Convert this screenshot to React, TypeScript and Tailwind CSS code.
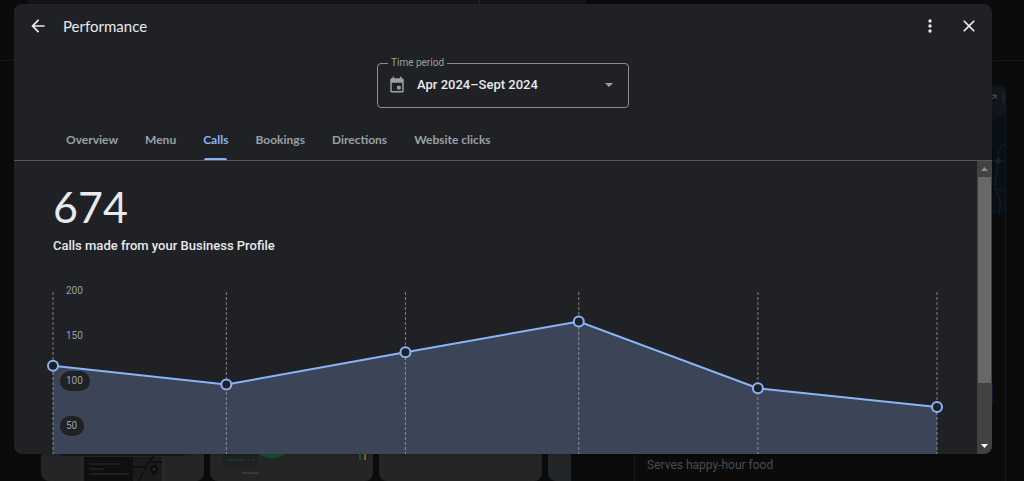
import React from 'react';

const tabs = ['Overview', 'Menu', 'Calls', 'Bookings', 'Directions', 'Website clicks'];

const calls = [
  { month: 'Apr', days: 30, value: 117 },
  { month: 'May', days: 31, value: 96 },
  { month: 'Jun', days: 30, value: 132 },
  { month: 'Jul', days: 31, value: 166 },
  { month: 'Aug', days: 31, value: 92 },
  { month: 'Sept', days: 30, value: 71 },
];

const CHART_WIDTH = 884;
const CHART_HEIGHT = 180;
const MAX_VALUE = 200;

const yFor = (value: number) => CHART_HEIGHT - (value / MAX_VALUE) * CHART_HEIGHT;

const CallsChart: React.FC = () => {
  const totalDays = calls.slice(0, -1).reduce((sum, c) => sum + c.days, 0);
  const points = calls.map((c, i) => {
    const daysBefore = calls.slice(0, i).reduce((sum, p) => sum + p.days, 0);
    return { month: c.month, x: (daysBefore / totalDays) * CHART_WIDTH, y: yFor(c.value) };
  });
  const line = points.map((p) => `${p.x},${p.y}`).join(' ');

  return (
    <svg
      viewBox={`0 0 ${CHART_WIDTH} ${CHART_HEIGHT}`}
      className="block w-full shrink-0 overflow-visible"
      role="img"
      aria-label="Calls per month"
    >
      <polygon points={`0,${CHART_HEIGHT} ${line} ${CHART_WIDTH},${CHART_HEIGHT}`} fill="#3b4557" />
      {points.map((p) => (
        <line
          key={p.month}
          x1={p.x}
          x2={p.x}
          y1={1}
          y2={CHART_HEIGHT}
          stroke="#bdc1c6"
          strokeOpacity={0.6}
          strokeDasharray="3 2"
        />
      ))}
      <polyline points={line} fill="none" stroke="#8ab4f8" strokeWidth={2} />
      {points.map((p) => (
        <circle key={p.month} cx={p.x} cy={p.y} r={5} fill="#202124" stroke="#8ab4f8" strokeWidth={2} />
      ))}
      {[200, 150, 100, 50].map((tick) => (
        <g key={tick}>
          <rect
            x={7}
            y={yFor(tick) - 10}
            width={tick >= 100 ? 30 : 24}
            height={20}
            rx={10}
            fill="#202124"
          />
          <text x={13} y={yFor(tick) + 3} fill="#9aa0a6" className="font-['Roboto',sans-serif] text-[10px]">
            {tick}
          </text>
        </g>
      ))}
    </svg>
  );
};

const Scrollbar: React.FC = () => (
  <div className="flex w-[15px] shrink-0 flex-col bg-[#424242]" aria-hidden="true">
    <svg viewBox="0 0 15 16" className="h-4 w-[15px] shrink-0">
      <path d="M4 10h7L7.5 6z" fill="#8c8c8c" />
    </svg>
    <div className="mx-px h-[206px] shrink-0 bg-[#686868]"></div>
    <div className="flex-1"></div>
    <svg viewBox="0 0 15 16" className="h-4 w-[15px] shrink-0">
      <path d="M4 6h7l-3.500 4z" fill="#fff" />
    </svg>
  </div>
);

const BackgroundPage: React.FC = () => (
  <div className="flex h-full flex-col bg-[#0b0b0b]" aria-hidden="true">
    <div className="flex h-[61px] shrink-0 border-b border-[#151515] pl-7">
      <div className="flex h-9 w-[558px] rounded-b-2xl bg-[#131414]">
        <div className="ml-[451px] h-full border-l border-[#232424]"></div>
      </div>
    </div>
    <div className="flex min-h-0 flex-1">
      <div className="ml-[41px] flex w-[530px] shrink-0 items-end gap-[6px] overflow-hidden">
        <div className="flex h-20 w-[163px] shrink-0 items-end justify-center rounded-lg bg-[#242526]">
          <svg viewBox="0 0 124 29" className="h-[29px] w-[124px]">
            <path d="M0 0h124v4H0z" fill="#18191a" />
            <path d="M22 5h50v24H22z" fill="#0f0f10" />
            <path d="M72 5h30v24H72z" fill="#191b1d" />
            <path d="M28 12h32M28 17h15M28 22h40" stroke="#232425" strokeWidth="1.500" />
            <path d="M72 15h13l7-11M85 15l-7 14M88 10h14" stroke="#0e0f10" strokeWidth="1.500" fill="none" />
            <path d="M22 5v24M102 5v24" stroke="#343536" fill="none" />
            <path d="M93 13a4 4 0 0 1 4 4c0 3-4 7-4 7s-4-4-4-7a4 4 0 0 1 4-4z" fill="#0d0e0f" />
            <circle cx="93" cy="17" r="1.500" fill="#2b2c2e" />
          </svg>
        </div>
        <div className="flex h-20 w-[163px] shrink-0 items-end rounded-lg bg-[#242526]">
          <svg viewBox="0 0 163 34" className="h-[34px] w-[163px]">
            <path d="M13 6h35v14H13z" fill="#1e2021" />
            <path d="M16 13h19M38 13h2M42 13h3" stroke="#1d4327" />
            <ellipse cx="62" cy="4" rx="15" ry="7" fill="#1b4b27" />
            <path d="M32 26h17" stroke="#363738" strokeWidth="2" />
            <path d="M150 4v9" stroke="#1f4f2b" strokeWidth="2" />
            <path d="M155 4v9" stroke="#7c601c" strokeWidth="2" />
          </svg>
        </div>
        <div className="h-20 w-[163px] shrink-0 rounded-lg bg-[#242526]"></div>
        <div className="h-20 w-[163px] shrink-0 rounded-lg bg-[#222628]"></div>
      </div>
      <div className="ml-[63px] mt-[22px] flex w-[372px] shrink-0 flex-col justify-between rounded-t-lg border-x border-[#171717]">
        <svg viewBox="0 0 370 131" className="h-[131px] w-full">
          <rect width="370" height="131" rx="5" fill="#090f19" />
          <path d="M356 3h14v26l-8 5-6-3z" fill="#12161b" />
          <path d="M367 10h3v10h-3z" fill="#122536" />
          <path d="M357 12h4v4M361 12l-4 4" stroke="#555" fill="none" />
          <path
            d="M356 78h14M364 78c-2-10 2-15 6-17M364 78c-3 12-4 18-4 28l10 2M356 31l4 7M360 106c6 8 6 16 4 24"
            stroke="#171e27"
            fill="none"
          />
          <path d="M359 78l4-4 4 4-4 4z" fill="#1b1f24" />
        </svg>
        <div className="ml-auto mt-[120px] h-[26px] w-[340px] rounded-[4px] bg-[#121e31] mr-3"></div>
        <p className="px-3 pb-[7px] font-['Roboto',sans-serif] text-xs leading-[18px] text-[#4a4b4d]">
          Serves happy-hour food
        </p>
      </div>
    </div>
  </div>
);

const App: React.FC = () => {
  return (
    <div className="relative h-screen overflow-hidden font-['Roboto',sans-serif]">
      <BackgroundPage />
      <div className="absolute inset-0 flex pb-[27px] pl-[14px] pr-8 pt-1">
        <div
          role="dialog"
          aria-labelledby="dialog-title"
          className="flex min-w-0 flex-1 flex-col overflow-hidden rounded-lg bg-[#202124] text-[#e8eaed] shadow-sm"
        >
          <header className="flex h-11 shrink-0 items-center px-[13px]">
            <button type="button" aria-label="Back" className="ml-px">
              <svg viewBox="0 0 24 24" className="size-5" fill="currentColor">
                <path d="M20 11H7.830l5.590-5.590L12 4l-8 8 8 8 1.410-1.410L7.830 13H20z" />
              </svg>
            </button>
            <h1 id="dialog-title" className="ml-[15px] flex-1 font-['Lato',sans-serif] text-[15px]">
              Performance
            </h1>
            <button type="button" aria-label="More options">
              <svg viewBox="0 0 24 24" className="size-5" fill="currentColor">
                <circle cx="12" cy="6" r="2" />
                <circle cx="12" cy="12" r="2" />
                <circle cx="12" cy="18" r="2" />
              </svg>
            </button>
            <button type="button" aria-label="Close" className="ml-[19px]">
              <svg viewBox="0 0 24 24" className="size-5" fill="currentColor">
                <path d="M19 6.410 17.590 5 12 10.590 6.410 5 5 6.410 10.590 12 5 17.590 6.410 19 12 13.410 17.590 19 19 17.590 13.410 12z" />
              </svg>
            </button>
          </header>

          <fieldset className="mx-auto mt-2 h-[52px] w-[252px] shrink-0 rounded border border-[#8b8d91] pl-[10px]">
            <legend className="px-[3px] text-[10px] leading-[14px] text-[#9aa0a6]">
              <label htmlFor="period">Time period</label>
            </legend>
            <div className="relative flex h-[30px] items-center">
              <svg viewBox="0 0 24 24" className="size-[18px] shrink-0" fill="#9aa0a6">
                <path d="M19 3h-1V1h-2v2H8V1H6v2H5a2 2 0 0 0-2 2v15a2 2 0 0 0 2 2h14a2 2 0 0 0 2-2V5a2 2 0 0 0-2-2zm0 17H5V9h14z" />
                <rect x="12" y="13" width="5" height="5" rx="1.500" />
              </svg>
              <select
                id="period"
                className="ml-[11px] flex-1 appearance-none bg-transparent text-[13px] font-medium text-[#e8eaed] outline-none"
              >
                <option>Apr 2024–Sept 2024</option>
              </select>
              <svg viewBox="0 0 10 5" className="pointer-events-none absolute right-[14px] h-[5px] w-[10px]">
                <path d="M1 0h8L5 4z" fill="#9aa0a6" />
              </svg>
            </div>
          </fieldset>

          <nav className="mt-3 flex h-[41px] shrink-0 gap-[27px] border-b border-[#55575c] pl-[52px]">
            {tabs.map((tab) => (
              <button
                key={tab}
                type="button"
                className={
                  tab === 'Calls'
                    ? "relative font-['Lato',sans-serif] text-xs font-bold text-[#8ab4f8]"
                    : "font-['Lato',sans-serif] text-xs font-bold text-[#9aa0a6]"
                }
              >
                {tab}
                {tab === 'Calls' && (
                  <span className="absolute inset-x-[1px] bottom-0 h-[2px] rounded-t bg-[#8ab4f8]"></span>
                )}
              </button>
            ))}
          </nav>

          <div className="flex min-h-0 flex-1">
            <main className="flex min-w-0 flex-1 flex-col overflow-hidden pl-[39px] pr-10">
              <p className="mt-6 font-['Lato',sans-serif] text-[43px] leading-[44px]">674</p>
              <h2 className="mt-[6px] text-[13px] font-medium leading-[22px]">
                Calls made from your Business Profile
              </h2>
              <div className="mt-[34px] shrink-0">
                <CallsChart />
              </div>
            </main>
            <Scrollbar />
          </div>
        </div>
      </div>
    </div>
  );
};

export default App;
